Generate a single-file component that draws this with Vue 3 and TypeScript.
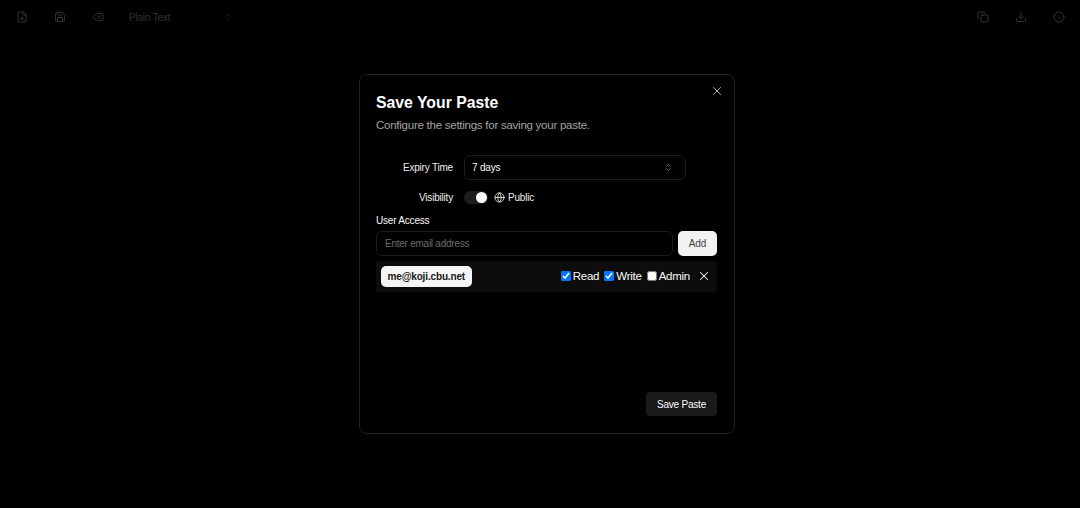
<template>
  <div class="page">
    <header class="toolbar">
      <div class="tools">
        <button class="tool" type="button" aria-label="New">
          <svg viewBox="0 0 24 24"><path d="M15 2H6a2 2 0 0 0-2 2v16a2 2 0 0 0 2 2h12a2 2 0 0 0 2-2V7z" /><path d="M14 2v4a2 2 0 0 0 2 2h4" /><path d="M9 15h6" /><path d="M12 18v-6" /></svg>
        </button>
        <button class="tool" type="button" aria-label="Save">
          <svg viewBox="0 0 24 24"><path d="M15.2 3a2 2 0 0 1 1.4.6l3.8 3.8a2 2 0 0 1 .6 1.4V19a2 2 0 0 1-2 2H5a2 2 0 0 1-2-2V5a2 2 0 0 1 2-2z" /><path d="M17 21v-7a1 1 0 0 0-1-1H8a1 1 0 0 0-1 1v7" /><path d="M7 3v4a1 1 0 0 0 1 1h7" /></svg>
        </button>
        <button class="tool" type="button" aria-label="Clear">
          <svg viewBox="0 0 24 24"><path d="M10 5a2 2 0 0 0-1.344.519l-6.328 5.74a1 1 0 0 0 0 1.481l6.328 5.741A2 2 0 0 0 10 19h10a2 2 0 0 0 2-2V7a2 2 0 0 0-2-2z" /><path d="m12 9 6 6" /><path d="m18 9-6 6" /></svg>
        </button>
        <div class="language">
          <span>Plain Text</span>
          <svg viewBox="0 0 24 24"><path d="m7 15 5 5 5-5" /><path d="m7 9 5-5 5 5" /></svg>
        </div>
      </div>
      <div class="tools">
        <button class="tool" type="button" aria-label="Copy">
          <svg viewBox="0 0 24 24"><rect x="8" y="8" width="14" height="14" rx="2" /><path d="M4 16c-1.1 0-2-.9-2-2V4c0-1.1.9-2 2-2h10c1.1 0 2 .9 2 2" /></svg>
        </button>
        <button class="tool" type="button" aria-label="Download">
          <svg viewBox="0 0 24 24"><path d="M12 15V3" /><path d="M21 15v4a2 2 0 0 1-2 2H5a2 2 0 0 1-2-2v-4" /><path d="m7 10 5 5 5-5" /></svg>
        </button>
        <button class="tool" type="button" aria-label="About">
          <svg viewBox="0 0 24 24"><circle cx="12" cy="12" r="10" /><path d="M12 16v-4" /><path d="M12 8h.01" /></svg>
        </button>
      </div>
    </header>

    <div class="overlay">
      <section class="dialog">
        <button class="close" type="button" aria-label="Close">
          <svg viewBox="0 0 24 24"><path d="M18 6 6 18" /><path d="m6 6 12 12" /></svg>
        </button>

        <h2>Save Your Paste</h2>
        <p class="subtitle">Configure the settings for saving your paste.</p>

        <div class="field expiry">
          <label>Expiry Time</label>
          <div class="select">
            <span>7 days</span>
            <svg viewBox="0 0 24 24"><path d="m7 15 5 5 5-5" /><path d="m7 9 5-5 5 5" /></svg>
          </div>
        </div>

        <div class="field visibility">
          <label>Visibility</label>
          <div class="switch" :class="{ active: isPublic }" @click="isPublic = !isPublic">
            <div class="switch-handle"></div>
          </div>
          <div class="public">
            <svg viewBox="0 0 24 24"><circle cx="12" cy="12" r="10" /><path d="M12 2a14.5 14.5 0 0 0 0 20 14.5 14.5 0 0 0 0-20" /><path d="M2 12h20" /></svg>
            <span>Public</span>
          </div>
        </div>

        <div class="access-title">User Access</div>
        <div class="access-add">
          <input class="email" type="text" placeholder="Enter email address" />
          <button class="add" type="button">Add</button>
        </div>

        <div v-for="user in users" :key="user.email" class="user-row">
          <span class="badge">{{ user.email }}</span>
          <div class="perms">
            <label v-for="perm in user.perms" :key="perm.name" class="perm">
              <input v-model="perm.checked" type="checkbox" />
              <span>{{ perm.name }}</span>
            </label>
            <button class="remove" type="button" aria-label="Remove">
              <svg viewBox="0 0 24 24"><path d="M18 6 6 18" /><path d="m6 6 12 12" /></svg>
            </button>
          </div>
        </div>

        <div class="footer">
          <button class="save" type="button">Save Paste</button>
        </div>
      </section>
    </div>
  </div>
</template>

<script setup lang="ts">
import { reactive, ref } from 'vue';

const isPublic = ref(true);

const users = reactive([
  {
    email: 'me@koji.cbu.net',
    perms: [
      { name: 'Read', checked: true },
      { name: 'Write', checked: true },
      { name: 'Admin', checked: false }
    ]
  }
]);
</script>

<style>
html,
body {
  margin: 0;
  background: #000;
}
</style>

<style scoped>
.page {
  position: relative;
  width: 1080px;
  height: 508px;
  overflow: hidden;
  background: #000;
  font-family: "Liberation Sans", Arial, sans-serif;
  color: #fafafa;
}

svg {
  fill: none;
  stroke: currentColor;
  stroke-width: 2;
  stroke-linecap: round;
  stroke-linejoin: round;
}

button {
  font-family: inherit;
  cursor: pointer;
}

.toolbar {
  display: flex;
  justify-content: space-between;
  height: 34px;
  padding: 0 3px 0 4px;
  color: #fafafa;
}

.tools {
  display: flex;
  align-items: center;
  gap: 2px;
}

.tool {
  display: flex;
  align-items: center;
  justify-content: center;
  width: 36px;
  height: 34px;
  padding: 0;
  border: 0;
  background: none;
  color: inherit;
}

.tool svg {
  width: 12px;
  height: 12px;
}

.language {
  display: flex;
  align-items: center;
  justify-content: space-between;
  width: 103px;
  padding: 0 8px 0 11px;
  font-size: 10px;
  letter-spacing: -0.2px;
  color: #e0e0e0;
}

.language svg {
  width: 8px;
  height: 8px;
}

.overlay {
  position: absolute;
  inset: 0;
  display: flex;
  align-items: center;
  justify-content: center;
  padding-left: 14px;
  background: rgba(0, 0, 0, 0.8);
}

.dialog {
  position: relative;
  box-sizing: border-box;
  display: flex;
  flex-direction: column;
  width: 376px;
  height: 360px;
  padding: 18px 17px 17px 16px;
  border: 1px solid #222;
  border-radius: 8px;
  background: #000;
}

.close {
  position: absolute;
  top: 9px;
  right: 10px;
  display: flex;
  width: 14px;
  height: 14px;
  padding: 0;
  border: 0;
  background: none;
  color: #bbb;
}

.close svg {
  width: 14px;
  height: 14px;
  stroke-width: 1.6;
}

h2 {
  margin: 0;
  font-size: 15.8px;
  line-height: 20px;
  font-weight: 700;
  color: #fff;
}

.subtitle {
  margin: 3px 0 0;
  font-size: 11.5px;
  letter-spacing: -0.25px;
  line-height: 18px;
  color: #a3a3a3;
}

.field {
  display: flex;
  align-items: center;
}

.field label {
  box-sizing: border-box;
  width: 77px;
  margin-right: 11px;
  font-size: 10px;
  letter-spacing: -0.2px;
  text-align: right;
  color: #eee;
}

.expiry {
  margin-top: 21px;
}

.select {
  box-sizing: border-box;
  display: flex;
  align-items: center;
  justify-content: space-between;
  width: 222px;
  height: 25px;
  padding: 0 12px 0 7px;
  border: 1px solid #1c1c1c;
  border-radius: 6px;
  font-size: 10px;
  letter-spacing: -0.2px;
  color: #fafafa;
}

.select svg {
  width: 9px;
  height: 9px;
  color: #8a8a8a;
}

.visibility {
  margin-top: 9px;
  height: 17px;
}

.switch {
  position: relative;
  width: 24px;
  height: 13px;
  border-radius: 7px;
  background: #1e1e1e;
  cursor: pointer;
}

.switch-handle {
  position: absolute;
  top: 1px;
  left: 1px;
  width: 11px;
  height: 11px;
  border-radius: 50%;
  background: #fff;
}

.switch.active .switch-handle {
  left: 12px;
}

.public {
  display: flex;
  align-items: center;
  gap: 3px;
  margin-left: 6px;
  font-size: 10px;
  letter-spacing: -0.2px;
  color: #eee;
}

.public svg {
  width: 11px;
  height: 11px;
  stroke-width: 1.8;
}

.access-title {
  margin-top: 8px;
  font-size: 10px;
  letter-spacing: -0.2px;
  line-height: 14px;
  color: #fafafa;
}

.access-add {
  display: flex;
  gap: 5px;
  margin-top: 3px;
}

.email {
  box-sizing: border-box;
  flex: 1;
  min-width: 0;
  height: 25px;
  padding: 0 8px;
  border: 1px solid #1c1c1c;
  border-radius: 6px;
  outline: none;
  background: transparent;
  font-family: inherit;
  font-size: 10px;
  letter-spacing: -0.25px;
  color: #fafafa;
}

.email::placeholder {
  color: #6b6b6b;
}

.add {
  width: 39px;
  height: 25px;
  padding: 0;
  border: 0;
  border-radius: 5px;
  background: #f2f2f2;
  font-size: 10px;
  letter-spacing: -0.1px;
  color: #404040;
}

.user-row {
  display: flex;
  align-items: center;
  justify-content: space-between;
  height: 31px;
  margin-top: 5px;
  padding: 0 5px;
  border-radius: 3px;
  background: #0d0d0d;
}

.badge {
  display: flex;
  align-items: center;
  height: 21px;
  padding: 0 6.5px;
  border-radius: 5px;
  background: #f5f5f5;
  font-size: 10px;
  letter-spacing: -0.15px;
  font-weight: 700;
  color: #171717;
}

.perms {
  display: flex;
  align-items: center;
  gap: 5px;
  margin-bottom: 1px;
}

.perm {
  display: flex;
  align-items: center;
  gap: 2px;
  font-size: 11.5px;
  letter-spacing: -0.25px;
  color: #fafafa;
}

.perm input {
  width: 10px;
  height: 10px;
  margin: 0;
  accent-color: #0075ff;
}

.remove {
  display: flex;
  width: 14px;
  height: 14px;
  margin: 0 1.5px;
  padding: 0;
  border: 0;
  background: none;
  color: #fafafa;
}

.remove svg {
  width: 14px;
  height: 14px;
  stroke-width: 1.8;
}

.footer {
  display: flex;
  justify-content: flex-end;
  margin-top: auto;
}

.save {
  width: 71px;
  height: 24px;
  padding: 0;
  border: 0;
  border-radius: 4px;
  background: #1a1a1a;
  font-size: 10px;
  letter-spacing: -0.2px;
  color: #fafafa;
}
</style>
